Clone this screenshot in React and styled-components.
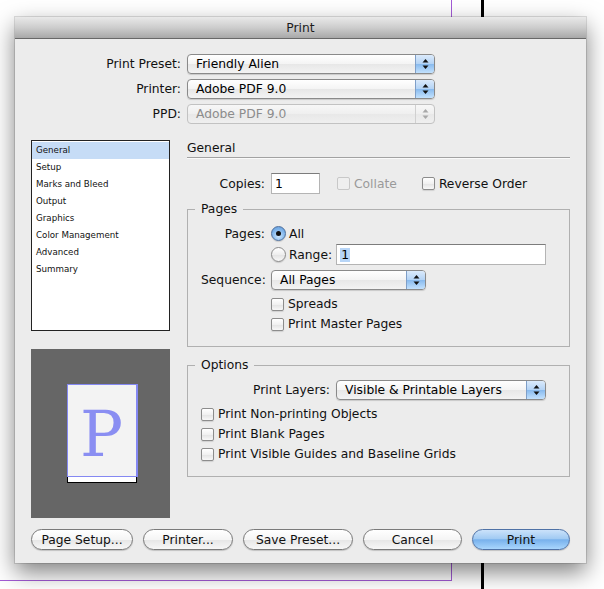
import React from 'react';
import styled, { createGlobalStyle } from 'styled-components';

const GlobalStyle = createGlobalStyle`
  html, body { margin: 0; padding: 0; background: #fff; }
  body {
    font-family: "DejaVu Sans", "Liberation Sans", sans-serif;
    font-size: 12.3px;
    color: #111;
  }
`;

const Desk = styled.div`
  position: relative;
  width: 604px;
  height: 589px;
  overflow: hidden;
  box-sizing: border-box;
  padding: 17px 0 0 15px;
  background: #fff;
`;

// layout guides of the document behind the dialog
const GuideV = styled.div`
  position: absolute;
  left: 451px;
  top: 0;
  width: 1px;
  height: 581px;
  background: #a35bd6;
`;
const GuideH = styled.div`
  position: absolute;
  left: 0;
  top: 580px;
  width: 452px;
  height: 1px;
  background: #a35bd6;
`;
const Rule = styled.div`
  position: absolute;
  left: 481px;
  top: 0;
  width: 3px;
  height: 589px;
  background: #000;
`;

const Window = styled.div`
  position: relative;
  z-index: 1;
  width: 571px;
  height: 546px;
  display: flex;
  flex-direction: column;
  background: #ececec;
  box-shadow: 0 9px 22px rgba(0, 0, 0, 0.5), 0 0 0 1px rgba(0, 0, 0, 0.12);
`;

const TitleBar = styled.div`
  height: 21px;
  flex: none;
  display: flex;
  align-items: center;
  justify-content: center;
  border-bottom: 1px solid #686868;
  background: linear-gradient(#e9e9e9, #cdcdcd 50%, #a8a8a8);
  color: #1c1c1c;
`;

const Body = styled.div`
  display: flex;
  flex-direction: column;
  padding: 15px 16px 13px;
`;

const PresetGrid = styled.div`
  display: grid;
  grid-template-columns: 150px 248px;
  grid-auto-rows: 20px;
  column-gap: 6px;
  row-gap: 5px;
  align-items: center;
`;

const FieldLabel = styled.div`
  text-align: right;
  white-space: nowrap;
  color: #111;
`;

const Popup = styled.div`
  box-sizing: border-box;
  width: ${p => p.$w}px;
  height: ${p => p.$h || 20}px;
  display: flex;
  align-items: center;
  border: 1px solid ${p => (p.$disabled ? '#c2c2c2' : '#8a8a8a')};
  border-radius: 4px;
  background: ${p =>
    p.$disabled
      ? 'linear-gradient(#f7f7f7, #efefef 50%, #e8e8e8 51%, #efefef)'
      : 'linear-gradient(#ffffff, #f4f4f4 50%, #e7e7e7 51%, #f3f3f3)'};
  box-shadow: ${p => (p.$disabled ? 'none' : '0 1px 1px rgba(0,0,0,0.15)')};
  color: ${p => (p.$disabled ? '#8c8c8c' : '#000')};
`;

const PopupText = styled.span`
  flex: 1;
  padding-left: 8px;
  white-space: nowrap;
  overflow: hidden;
`;

const Stepper = styled.span`
  width: 18px;
  align-self: stretch;
  display: flex;
  align-items: center;
  justify-content: center;
  border-left: 1px solid ${p => (p.$disabled ? '#d0d0d0' : '#7f9fc8')};
  border-radius: 0 3px 3px 0;
  background: ${p =>
    p.$disabled
      ? 'transparent'
      : 'linear-gradient(#dbeafb, #b3d3f5 50%, #88baee 51%, #c3e2fe)'};
`;

const Arrows = ({ color }) => (
  <svg width="7" height="12" viewBox="0 0 7 12">
    <path d="M3.5 1 L6.5 4.5 L0.5 4.5 Z" fill={color} />
    <path d="M0.5 7.5 L6.5 7.5 L3.5 11 Z" fill={color} />
  </svg>
);

const Select = ({ w, h, value, disabled }) => (
  <Popup $w={w} $h={h} $disabled={disabled}>
    <PopupText>{value}</PopupText>
    <Stepper $disabled={disabled}>
      <Arrows color={disabled ? '#a8a8a8' : '#111'} />
    </Stepper>
  </Popup>
);

const Middle = styled.div`
  display: grid;
  grid-template-columns: 139px 383px;
  column-gap: 17px;
  align-items: start;
  margin-top: 16px;
`;

const LeftCol = styled.div`
  display: flex;
  flex-direction: column;
  gap: 18px;
`;

const List = styled.div`
  box-sizing: border-box;
  height: 191px;
  padding-top: 1px;
  border: 1px solid #222;
  background: #fff;
`;

const ListItem = styled.div`
  height: 17px;
  line-height: 17px;
  padding-left: 4px;
  font-size: 8.7px;
  color: #111;
  background: ${p => (p.$active ? '#c6dcf6' : 'transparent')};
`;

const Preview = styled.div`
  height: 169px;
  display: flex;
  flex-direction: column;
  align-items: center;
  justify-content: center;
  padding-left: 3px;
  background: #666;
`;

const Sheet = styled.div`
  box-sizing: border-box;
  width: 71px;
  height: 93px;
  display: flex;
  align-items: center;
  justify-content: center;
  padding-top: 6px;
  border: 1px solid #8488f2;
  border-right-width: 2px;
  background: #f3f3f3;
  font-family: "DejaVu Serif", "Liberation Serif", serif;
  font-size: 64px;
  line-height: 1;
  color: #8a8ef2;
`;

const SheetBase = styled.div`
  box-sizing: border-box;
  width: 70px;
  height: 6px;
  margin-right: 1px;
  border: 1px solid #000;
  border-top: none;
  background: #fff;
`;

const RightCol = styled.div`
  display: flex;
  flex-direction: column;
`;

const Heading = styled.div`
  height: 17px;
  line-height: 17px;
  border-bottom: 1px solid #a2a2a2;
  box-shadow: 0 1px 0 #fafafa;
`;

const CopiesRow = styled.div`
  display: flex;
  align-items: center;
  height: 21px;
  margin-top: 15px;
`;

const RowLabel = styled.div`
  width: ${p => p.$w}px;
  flex: none;
  margin-right: 6px;
  text-align: right;
  white-space: nowrap;
`;

const TextField = styled.div`
  box-sizing: border-box;
  width: ${p => (p.$w ? `${p.$w}px` : 'auto')};
  flex: ${p => (p.$w ? 'none' : '1')};
  height: 21px;
  display: flex;
  align-items: center;
  padding-left: 3px;
  border: 1px solid #b4b4b4;
  border-top-color: #7c7c7c;
  background: #fff;
  color: #000;
`;

const Selected = styled.span`
  background: #b7d5f7;
  padding: 0 1px;
`;

const Check = styled.label`
  display: flex;
  align-items: center;
  gap: 4px;
  margin-left: ${p => p.$ml || 0}px;
  white-space: nowrap;
  color: ${p => (p.$disabled ? '#9a9a9a' : '#111')};
`;

const Box = styled.span`
  box-sizing: border-box;
  width: 13px;
  height: 13px;
  flex: none;
  border: 1px solid ${p => (p.$disabled ? '#c8c8c8' : '#8c8c8c')};
  border-radius: 2px;
  background: ${p =>
    p.$disabled
      ? '#efefef'
      : 'linear-gradient(#ffffff, #f1f1f1 50%, #e3e3e3 51%, #f8f8f8)'};
  box-shadow: ${p => (p.$disabled ? 'none' : '0 1px 1px rgba(0,0,0,0.12)')};
`;

const Checkbox = ({ label, disabled, ml }) => (
  <Check $disabled={disabled} $ml={ml}>
    <Box $disabled={disabled} />
    {label}
  </Check>
);

const Radio = styled.span`
  box-sizing: border-box;
  width: 15px;
  height: 15px;
  flex: none;
  display: flex;
  align-items: center;
  justify-content: center;
  border-radius: 50%;
  border: 1px solid ${p => (p.$on ? '#4d6f9c' : '#8a8a8a')};
  background: ${p =>
    p.$on
      ? 'radial-gradient(circle at 50% 70%, #cfe8ff, #7db3ea 60%, #5f97d8)'
      : 'linear-gradient(#ffffff, #eeeeee 50%, #e2e2e2 51%, #f8f8f8)'};
  box-shadow: 0 1px 1px rgba(0, 0, 0, 0.15);
  &::after {
    content: '';
    display: ${p => (p.$on ? 'block' : 'none')};
    width: 5px;
    height: 5px;
    border-radius: 50%;
    background: #111;
  }
`;

const RadioItem = styled.label`
  display: flex;
  align-items: center;
  gap: 3px;
  white-space: nowrap;
`;

const Group = styled.fieldset`
  margin: ${p => p.$mt}px 0 0;
  padding: ${p => p.$pt}px 23px 12px 13px;
  border: 1px solid #b0b0b0;
  min-width: 0;
`;

const Legend = styled.legend`
  margin-left: -6px;
  padding: 0 6px;
  line-height: 16px;
`;

const Line = styled.div`
  display: flex;
  align-items: center;
  height: ${p => p.$h || 20}px;
  margin-top: ${p => p.$mt || 0}px;
  padding-left: ${p => p.$indent || 0}px;
  justify-content: ${p => (p.$end ? 'flex-end' : 'flex-start')};
`;

const Buttons = styled.div`
  display: flex;
  gap: 10px;
  margin-top: 11px;
`;

const Button = styled.button`
  box-sizing: border-box;
  width: ${p => p.$w}px;
  height: 21px;
  padding: 0;
  border-radius: 11px;
  border: 1px solid ${p => (p.$primary ? '#4f72a6' : '#7a7a7a')};
  background: ${p =>
    p.$primary
      ? 'linear-gradient(#cbe2fa, #a2cbf3 45%, #78b1ec 52%, #a9d6fd)'
      : 'linear-gradient(#ffffff, #f5f5f5 50%, #e6e6e6 52%, #f7f7f7)'};
  box-shadow: 0 1px 1px rgba(0, 0, 0, 0.18);
  font-family: inherit;
  font-size: 12.3px;
  color: #111;
`;

const sections = [
  'General',
  'Setup',
  'Marks and Bleed',
  'Output',
  'Graphics',
  'Color Management',
  'Advanced',
  'Summary',
];

export default function App() {
  return (
    <Desk>
      <GlobalStyle />
      <GuideV />
      <GuideH />
      <Rule />
      <Window>
        <TitleBar>Print</TitleBar>
        <Body>
          <PresetGrid>
            <FieldLabel>Print Preset:</FieldLabel>
            <Select w={248} value="Friendly Alien" />
            <FieldLabel>Printer:</FieldLabel>
            <Select w={248} value="Adobe PDF 9.0" />
            <FieldLabel>PPD:</FieldLabel>
            <Select w={248} value="Adobe PDF 9.0" disabled />
          </PresetGrid>

          <Middle>
            <LeftCol>
              <List>
                {sections.map((s, i) => (
                  <ListItem key={s} $active={i === 0}>
                    {s}
                  </ListItem>
                ))}
              </List>
              <Preview>
                <Sheet>P</Sheet>
                <SheetBase />
              </Preview>
            </LeftCol>

            <RightCol>
              <Heading>General</Heading>
              <CopiesRow>
                <RowLabel $w={78}>Copies:</RowLabel>
                <TextField $w={49}>1</TextField>
                <Checkbox label="Collate" disabled ml={17} />
                <Checkbox label="Reverse Order" ml={25} />
              </CopiesRow>

              <Group $mt={7} $pt={6}>
                <Legend>Pages</Legend>
                <Line $h={21}>
                  <RowLabel $w={64}>Pages:</RowLabel>
                  <RadioItem>
                    <Radio $on />
                    All
                  </RadioItem>
                </Line>
                <Line $h={21} $indent={70}>
                  <RadioItem>
                    <Radio />
                    Range:
                  </RadioItem>
                  <TextField style={{ marginLeft: 4 }}>
                    <Selected>1</Selected>
                  </TextField>
                </Line>
                <Line $mt={5}>
                  <RowLabel $w={64}>Sequence:</RowLabel>
                  <Select w={155} value="All Pages" />
                </Line>
                <Line $mt={4} $indent={70}>
                  <Checkbox label="Spreads" />
                </Line>
                <Line $indent={70}>
                  <Checkbox label="Print Master Pages" />
                </Line>
              </Group>

              <Group $mt={10} $pt={7}>
                <Legend>Options</Legend>
                <Line $end>
                  <RowLabel $w={84}>Print Layers:</RowLabel>
                  <Select w={210} value="Visible & Printable Layers" />
                </Line>
                <Line $mt={4}>
                  <Checkbox label="Print Non-printing Objects" />
                </Line>
                <Line>
                  <Checkbox label="Print Blank Pages" />
                </Line>
                <Line>
                  <Checkbox label="Print Visible Guides and Baseline Grids" />
                </Line>
              </Group>
            </RightCol>
          </Middle>

          <Buttons>
            <Button $w={102}>Page Setup...</Button>
            <Button $w={90}>Printer...</Button>
            <Button $w={110}>Save Preset...</Button>
            <Button $w={99}>Cancel</Button>
            <Button $w={98} $primary>
              Print
            </Button>
          </Buttons>
        </Body>
      </Window>
    </Desk>
  );
}
